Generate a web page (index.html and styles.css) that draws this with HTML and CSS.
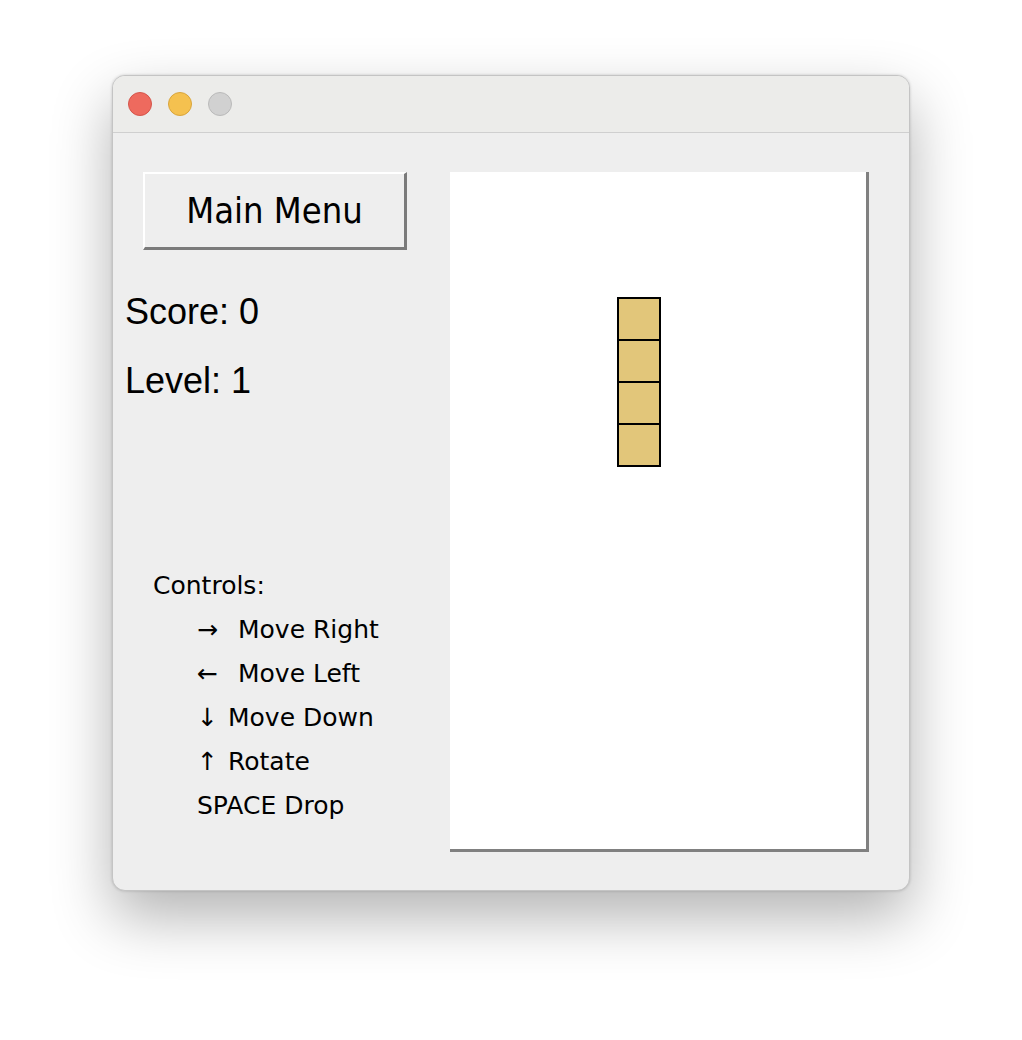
FILE: index.html
```html
<!DOCTYPE html>
<html>
<head>
<meta charset="utf-8">
<link rel="stylesheet" href="styles.css">
</head>
<body>
<div class="window">
  <div class="titlebar">
    <span class="dot red"></span>
    <span class="dot yellow"></span>
    <span class="dot gray"></span>
  </div>
  <div class="content">
    <div class="side">
      <button class="menu-btn">Main Menu</button>
      <div class="stat score">Score: 0</div>
      <div class="stat level">Level: 1</div>
      <div class="controls">
        <div class="ctl-title">Controls:</div>
        <div class="ctl"><span class="arr wide">→</span>Move Right</div>
        <div class="ctl"><span class="arr wide">←</span>Move Left</div>
        <div class="ctl"><span class="arr">↓</span>Move Down</div>
        <div class="ctl"><span class="arr">↑</span>Rotate</div>
        <div class="ctl">SPACE Drop</div>
      </div>
    </div>
    <div class="board">
      <div class="piece">
        <div class="cell"></div>
        <div class="cell"></div>
        <div class="cell"></div>
        <div class="cell"></div>
      </div>
    </div>
  </div>
</div>
</body>
</html>
```

FILE: styles.css
```css
html, body {
  margin: 0;
  padding: 0;
  background: #ffffff;
}
body {
  width: 1022px;
  height: 1040px;
  overflow: hidden;
}
.window {
  margin: 75px 0 0 112px;
  width: 798px;
  height: 816px;
  box-sizing: border-box;
  border-radius: 13px;
  background: #eeeeee;
  border: 1px solid #c4c4c4;
  box-shadow: 0 26px 60px rgba(0,0,0,0.3), 0 0 3px rgba(0,0,0,0.18);
  overflow: hidden;
}
.titlebar {
  height: 56px;
  background: #ececea;
  border-bottom: 1px solid #cfcfcf;
  display: flex;
  align-items: center;
  padding-left: 15px;
  gap: 16px;
}
.dot {
  width: 24px;
  height: 24px;
  border-radius: 50%;
  box-sizing: border-box;
}
.red { background: #ee6a5e; border: 1px solid #d5554b; }
.yellow { background: #f5c14f; border: 1px solid #d9a53c; }
.gray { background: #d1d1d1; border: 1px solid #bababa; }
.content {
  display: flex;
  height: 758px;
}
.side {
  width: 337px;
  padding-top: 39px;
  font-family: "Liberation Sans", Arial, sans-serif;
}
.menu-btn {
  display: block;
  margin-left: 30px;
  width: 264px;
  height: 78px;
  box-sizing: border-box;
  background: #eeeeee;
  border-style: solid;
  border-width: 2px 3px 3px 2px;
  border-color: #ffffff #7a7a7a #7a7a7a #ffffff;
  font-family: "DejaVu Sans Condensed", "DejaVu Sans", sans-serif;
  font-stretch: condensed;
  font-size: 36px;
  color: #000;
  padding: 0;
  line-height: 1;
}
.stat {
  font-size: 36px;
  line-height: 40px;
  margin-left: 12px;
  color: #000;
}
.score { margin-top: 42px; }
.level { margin-top: 29px; }
.controls {
  margin-top: 163px;
  font-family: "DejaVu Sans", sans-serif;
  font-size: 25px;
  line-height: 44px;
  color: #000;
}
.ctl-title { margin-left: 40px; }
.ctl {
  margin-left: 84px;
  white-space: pre;
}
.arr {
  display: inline-block;
  width: 31px;
}
.arr.wide { width: 41px; }
.board {
  margin-top: 39px;
  width: 416px;
  height: 677px;
  background: #ffffff;
  border-right: 3px solid #808080;
  border-bottom: 3px solid #808080;
  position: relative;
}
.piece {
  position: absolute;
  left: 167px;
  top: 125px;
  width: 44px;
  display: flex;
  flex-direction: column;
}
.cell {
  height: 44px;
  background: #e2c67a;
  border: 2px solid #000;
  box-sizing: border-box;
}
.cell + .cell { margin-top: -2px; }
```
